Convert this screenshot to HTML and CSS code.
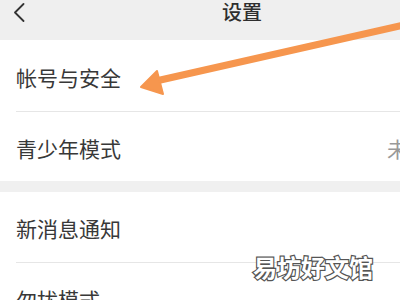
FILE: index.html
```html
<!DOCTYPE html>
<html lang="zh">
<head>
<meta charset="utf-8">
<link rel="stylesheet" href="styles.css">
</head>
<body>
<div class="screen">
  <header class="topbar">
    <svg class="back" width="12" height="19" viewBox="0 0 12 19"><path d="M10.5 1 L2 9.5 L10.5 18" fill="none" stroke="#333" stroke-width="1.8" stroke-linecap="round" stroke-linejoin="round"/></svg>
    <h1 class="title">设置</h1>
  </header>
  <section class="group">
    <div class="row first">帐号与安全</div>
    <div class="row"><span class="label">青少年模式</span><span class="value">未开启</span></div>
  </section>
  <div class="band"></div>
  <section class="group">
    <div class="row">新消息通知</div>
    <div class="row">勿扰模式</div>
  </section>
  <svg class="arrow" width="400" height="300" viewBox="0 0 400 300">
    <line x1="404" y1="25" x2="156" y2="81" stroke="#f6964e" stroke-width="7" stroke-linecap="round"/>
    <polygon points="141,87 157,71 163,94" fill="#f6964e" stroke="#f6964e" stroke-width="2" stroke-linejoin="round"/>
  </svg>
  <div class="watermark">易坊好文馆</div>
</div>
</body>
</html>
```

FILE: styles.css
```css
html, body {
  margin: 0;
  padding: 0;
  background: #fff;
}
.screen {
  position: relative;
  width: 400px;
  height: 300px;
  overflow: hidden;
  font-family: "Noto Sans CJK SC", "Noto Sans", sans-serif;
  color: #333;
}
.topbar {
  display: flex;
  align-items: flex-start;
  height: 40px;
  padding-left: 13px;
  background: #efefef;
  box-sizing: border-box;
}
.back {
  margin-top: 3px;
  flex: none;
}
.title {
  margin: 0 0 0 197px;
  font-size: 20px;
  line-height: 24px;
  font-weight: 500;
  color: #2e2e2e;
}
.group {
  background: #fff;
}
.row {
  display: flex;
  align-items: center;
  height: 70px;
  margin-left: 16px;
  padding-top: 2px;
  box-sizing: border-box;
  font-size: 21px;
  color: #383838;
  white-space: nowrap;
}
.row.first {
  height: 71px;
}
.row + .row {
  border-top: 1px solid #e6e6e6;
}
.label {
  flex: 1;
}
.value {
  color: #999;
  margin-right: -50px;
}
.band {
  height: 11px;
  background: #f0f0f0;
}
.arrow {
  position: absolute;
  left: 0;
  top: 0;
  pointer-events: none;
}
.watermark {
  position: absolute;
  left: 253px;
  top: 250px;
  font-size: 24px;
  line-height: 34px;
  font-weight: 700;
  color: #fff;
  -webkit-text-stroke: 2.4px #555;
  paint-order: stroke fill;
}
```
